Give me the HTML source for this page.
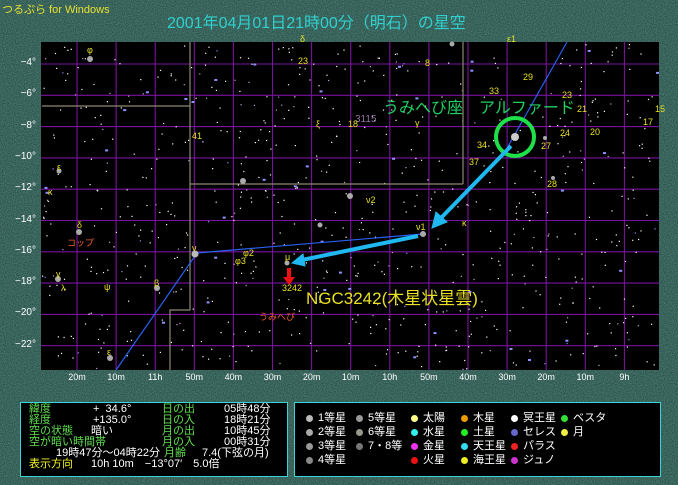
<!DOCTYPE html>
<html><head><meta charset="utf-8">
<style>
body{margin:0;width:678px;height:485px;overflow:hidden;background:#2e5a52;font-family:"Liberation Sans","Noto Sans CJK JP",sans-serif;position:relative}
.t{position:absolute;white-space:nowrap}
.box{position:absolute;background:#000;border:1px solid #3cd4d4}
.y{position:absolute;font-size:9px;color:#e8e020;white-space:nowrap}
</style></head><body>
<svg width="678" height="485" style="position:absolute;left:0;top:0">
<defs>
<filter id="n"><feTurbulence type="fractalNoise" baseFrequency="0.9" numOctaves="1" seed="3"/><feColorMatrix values="0 0 0 0 0.15  0 0 0 0 0.38  0 0 0 0 0.34  0 0 0 1.2 -0.3"/></filter>
</defs>
<rect width="678" height="485" fill="#2a5048"/>
<rect width="678" height="485" filter="url(#n)" opacity="0.8"/>
<rect x="41" y="42" width="618" height="328" fill="#000"/>
<g id="grid" stroke="#7a12a0" stroke-width="1.1"></g>
<g id="stars"></g>
<g fill="none" stroke="#8c8870" stroke-width="1.2">
<path d="M42 106H190M190 42V310H170V370M190 184H463M463 42V184"/>
</g>
<g stroke="#2860f0" stroke-width="1.2" fill="none">
<path d="M567 42L506 150"/>
<path d="M423 234L197 253L116 370"/>
</g>
<circle cx="515" cy="137" r="19" fill="none" stroke="#1ee048" stroke-width="4"/>
<g fill="#aaa"><circle cx="515" cy="137" r="4" fill="#ccc"/><circle cx="423" cy="234" r="3"/><circle cx="195" cy="254" r="3.5" fill="#bbb"/><circle cx="287" cy="263" r="2.5"/><circle cx="90" cy="59" r="3"/><circle cx="79" cy="232" r="3"/><circle cx="58" cy="279" r="3"/><circle cx="157" cy="288" r="3"/><circle cx="110" cy="358" r="3"/><circle cx="350" cy="196" r="3"/><circle cx="243" cy="181" r="3"/><circle cx="59" cy="171" r="2.5"/><circle cx="545" cy="138" r="2"/><circle cx="553" cy="178" r="2"/><circle cx="452" cy="44" r="2.5"/><circle cx="320" cy="225" r="2.5"/></g>
<g stroke="#20b8f0" stroke-width="4" fill="#20b8f0">
<line x1="511" y1="146" x2="440" y2="219"/><path d="M432 228L436 212L447 222Z" stroke-width="1"/>
<line x1="418" y1="236" x2="302" y2="260"/><path d="M292 263L303 254L305 266Z" stroke-width="1"/>
</g>
<path d="M287 268L291 268L291 277L295 277L289 285L283 277L287 277Z" fill="#f01010"/>
</svg>
<div class="t" style="left:2px;top:1px;font-size:11px;color:#e8e030">つるぷら for Windows</div>
<div class="t" style="left:167px;top:9px;font-size:16px;color:#30d0d0">2001年04月01日21時00分（明石）の星空</div>
<div class="t" style="left:383px;top:94px;font-size:16px;color:#20d060">うみへび座　アルファード</div>
<div class="t" style="left:306px;top:284px;font-size:17px;color:#e8e020">NGC3242(木星状星雲)</div>
<div class="t" style="left:67px;top:236px;font-size:9px;color:#f06020">コップ</div>
<div class="t" style="left:259px;top:310px;font-size:9px;color:#f06020">うみへび</div>
<div class="t" style="left:355px;top:114px;font-size:10px;color:#9070a0">3115</div>
<div class="y" style="left:87px;top:45px">φ</div><div class="y" style="left:300px;top:34px">δ</div><div class="y" style="left:507px;top:34px">ε1</div>
<div class="y" style="left:298px;top:56px">23</div><div class="y" style="left:425px;top:58px">8</div><div class="y" style="left:523px;top:72px">29</div>
<div class="y" style="left:489px;top:86px">33</div><div class="y" style="left:562px;top:90px">23</div><div class="y" style="left:577px;top:104px">21</div>
<div class="y" style="left:655px;top:104px">15</div><div class="y" style="left:643px;top:117px">17</div><div class="y" style="left:590px;top:127px">20</div><div class="y" style="left:560px;top:128px">24</div>
<div class="y" style="left:477px;top:140px">34</div><div class="y" style="left:541px;top:141px">27</div><div class="y" style="left:469px;top:157px">37</div><div class="y" style="left:547px;top:179px">28</div>
<div class="y" style="left:192px;top:131px">41</div><div class="y" style="left:348px;top:119px">18</div><div class="y" style="left:415px;top:118px">γ</div><div class="y" style="left:316px;top:119px">ξ</div>
<div class="y" style="left:366px;top:195px">ν2</div><div class="y" style="left:416px;top:222px">ν1</div><div class="y" style="left:462px;top:218px">κ</div>
<div class="y" style="left:57px;top:162px">ε</div><div class="y" style="left:48px;top:187px">κ</div><div class="y" style="left:77px;top:220px">δ</div>
<div class="y" style="left:192px;top:243px">ν</div><div class="y" style="left:243px;top:248px">φ2</div><div class="y" style="left:235px;top:256px">φ3</div>
<div class="y" style="left:285px;top:252px">μ</div><div class="y" style="left:282px;top:283px">3242</div>
<div class="y" style="left:56px;top:269px">γ</div><div class="y" style="left:61px;top:283px">λ</div><div class="y" style="left:104px;top:282px">ψ</div><div class="y" style="left:154px;top:278px">β</div><div class="y" style="left:107px;top:347px">ε</div>
<div id="lab"></div>
<div class="box" style="left:20px;top:402px;width:266px;height:73px"></div>
<div class="box" style="left:294px;top:402px;width:365px;height:73px"></div>
<div id="info" style="position:absolute;left:0;top:0;font-size:11px;line-height:11px"></div>
<script>
var g=document.getElementById('grid'),s='';
for(var i=0;i<15;i++){var x=77+i*39.1;s+='<line x1="'+x+'" y1="42" x2="'+x+'" y2="370"/>';}
for(var j=0;j<10;j++){var y=64+j*31.3;s+='<line x1="41" y1="'+y+'" x2="659" y2="'+y+'"/>';}
g.innerHTML=s;
var r=12345;function rnd(){r=(r*16807)%2147483647;return r/2147483647;}
var st='';for(var k=0;k<750;k++){var x=42+rnd()*616,y=43+rnd()*326,c=rnd();var col=c<0.8?'#fff':(c<0.93?'#c8a0d8':'#9090ff');var w=c>0.95?3:1.2;st+='<rect x="'+x.toFixed(1)+'" y="'+y.toFixed(1)+'" width="'+w+'" height="'+(w>2?2:1.2)+'" fill="'+col+'"/>';}
document.getElementById('stars').innerHTML=st;
var L='',dec=['−4°','−6°','−8°','−10°','−12°','−14°','−16°','−18°','−20°','−22°'];
for(var j=0;j<10;j++)L+='<div class="t" style="right:642px;top:'+(57+j*31.3)+'px;font-size:10px;color:#fff">'+dec[j]+'</div>';
var ra=['20m','10m','11h','50m','40m','30m','20m','10m','10h','50m','40m','30m','20m','10m','9h'];
for(var i=0;i<15;i++)L+='<div class="t" style="left:'+(77+i*39.1-10)+'px;top:372px;width:20px;text-align:center;font-size:9px;color:#fff">'+ra[i]+'</div>';
document.getElementById('lab').innerHTML=L;
function T(x,y,t,c){return '<div class="t" style="left:'+x+'px;top:'+y+'px;color:'+c+'">'+t+'</div>';}
var G='#60e050',W='#fff',Y='#f0f020',I='';
I+=T(29,404,'緯度',G)+T(93,404,'+&nbsp;&nbsp;34.6°',W)+T(162,404,'日の出',G)+T(224,404,'05時48分',W);
I+=T(29,415,'経度',G)+T(93,415,'+135.0°',W)+T(162,415,'日の入',G)+T(224,415,'18時21分',W);
I+=T(29,426,'空の状態',G)+T(91,426,'暗い',W)+T(162,426,'月の出',G)+T(224,426,'10時45分',W);
I+=T(29,437,'空が暗い時間帯',G)+T(162,437,'月の入',G)+T(224,437,'00時31分',W);
I+=T(56,448,'19時47分〜04時22分',W)+T(164,448,'月齢',G)+T(202,448,'7.4(下弦の月)',W);
I+=T(29,459,'表示方向',Y)+T(91,459,'10h 10m　−13°07′　5.0倍',W);
var rows=[['1等星','5等星','太陽','木星','冥王星','ベスタ'],['2等星','6等星','水星','土星','セレス','月'],['3等星','7・8等','金星','天王星','パラス',''],['4等星','','火星','海王星','ジュノ','']];
var xs=[318,368,423,473,523,573],ic2=[['#bbb','#999','#ff8','#e90','#fff','#3d3'],['#aaa','#998','#3ee','#2e2','#66c','#ee4'],['#999','#777','#e3e','#3de','#e22',''],['#888','','#e11','#ee2','#c3c','']];
for(var a=0;a<4;a++)for(var b=0;b<6;b++){var t=rows[a][b];if(!t)continue;var y=413+a*14;I+='<div class="t" style="left:'+(xs[b]-12)+'px;top:'+(y+2)+'px;width:7px;height:7px;border-radius:50%;background:'+ic2[a][b]+'"></div>'+T(xs[b],y,t,W);}
document.getElementById('info').innerHTML=I;
</script>
</body></html>
